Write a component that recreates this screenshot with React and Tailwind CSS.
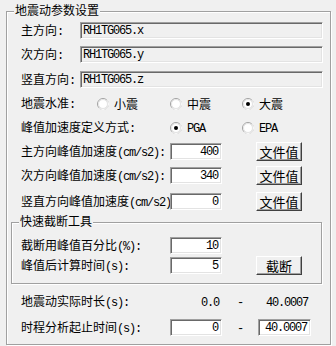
import React from 'react';

const mono = "font-['Liberation_Mono',monospace] text-[12px] tracking-[-1.2px]";

function M({ children }) {
  return <span className={mono}>{children}</span>;
}

function Edit({ value, w = 'w-[52px]', readOnly = false }) {
  return (
    <div
      className={`${w} h-[17px] flex-none flex items-center border border-t-[#a0a0a0] border-l-[#a0a0a0] border-r-white border-b-white shadow-[inset_1px_1px_0_#696969,inset_-1px_-1px_0_#e3e3e3] ${
        readOnly ? 'bg-[#f0f0f0] justify-start pl-[2px]' : 'bg-white justify-end pr-[3px]'
      }`}
    >
      <span className={mono}>{value}</span>
    </div>
  );
}

function Btn({ children }) {
  return (
    <button className="ml-[34px] w-[46px] h-[19px] flex-none flex items-center justify-center bg-[#f0f0f0] border border-t-white border-l-white border-r-[#404040] border-b-[#404040] shadow-[inset_-1px_-1px_0_#a0a0a0] text-[13px] leading-[15px]">
      {children}
    </button>
  );
}

function Radio({ checked }) {
  return (
    <svg width="12" height="12" viewBox="0 0 12 12" className="flex-none">
      <circle cx="6" cy="6" r="5.5" fill="#fff" stroke="#a0a0a0" />
      <path d="M9.89 2.11 A5.5 5.5 0 0 1 2.11 9.89" fill="none" stroke="#fff" />
      <circle cx="6" cy="6" r="4.5" fill="#fff" stroke="#e3e3e3" />
      {checked && <circle cx="6" cy="6" r="2" fill="#000" />}
    </svg>
  );
}

function Option({ label, checked, w = 'w-[73px]' }) {
  return (
    <div className={`${w} flex-none flex items-center gap-[5px]`}>
      <Radio checked={checked} />
      <span>{label}</span>
    </div>
  );
}

function Row({ mt, label, lw = 'w-[149px]', children }) {
  return (
    <div className={`${mt} h-[17px] flex items-center`}>
      <div className={`${lw} flex-none whitespace-nowrap`}>{label}</div>
      {children}
    </div>
  );
}

export default function App() {
  return (
    <div className="w-[336px] h-[346px] bg-[#f0f0f0] pt-[11px] text-black font-['Noto_Sans_CJK_SC',sans-serif] text-[12px] leading-[14px]">
      <div className="relative ml-[6px] w-[325px] h-[334px] border border-[#a0a0a0] shadow-[inset_1px_1px_0_#fff,1px_1px_0_#fff] pl-[14px] flex flex-col">
        <div className="absolute left-[7px] -top-[9px] px-[1px] bg-[#f0f0f0]">地震动参数设置</div>

        <Row mt="mt-[10px]" lw="w-[59px]" label={<>主方向<M>:</M></>}>
          <Edit value="RH1TG065.x" w="w-[243px]" readOnly />
        </Row>
        <Row mt="mt-[7px]" lw="w-[59px]" label={<>次方向<M>:</M></>}>
          <Edit value="RH1TG065.y" w="w-[243px]" readOnly />
        </Row>
        <Row mt="mt-[8px]" lw="w-[59px]" label={<>竖直方向<M>:</M></>}>
          <Edit value="RH1TG065.z" w="w-[243px]" readOnly />
        </Row>

        <Row mt="mt-[7px]" lw="w-[76px]" label={<>地震水准<M>:</M></>}>
          <Option label="小震" />
          <Option label="中震" w="w-[72px]" />
          <Option label="大震" checked />
        </Row>
        <Row mt="mt-[7px]" label={<>峰值加速度定义方式<M>:</M></>}>
          <Option label={<M>PGA</M>} checked w="w-[72px]" />
          <Option label={<M>EPA</M>} />
        </Row>

        <Row mt="mt-[7px]" label={<>主方向峰值加速度<M>(cm/s2):</M></>}>
          <Edit value="400" />
          <Btn>文件值</Btn>
        </Row>
        <Row mt="mt-[7px]" label={<>次方向峰值加速度<M>(cm/s2):</M></>}>
          <Edit value="340" />
          <Btn>文件值</Btn>
        </Row>
        <Row mt="mt-[9px]" label={<>竖直方向峰值加速度<M>(cm/s2):</M></>}>
          <Edit value="0" />
          <Btn>文件值</Btn>
        </Row>

        <div className="relative mt-[12px] -ml-[10px] w-[311px] h-[62px] flex-none border border-[#a0a0a0] shadow-[inset_1px_1px_0_#fff,1px_1px_0_#fff] pl-[9px] flex flex-col">
          <div className="absolute left-[7px] -top-[9px] px-[1px] bg-[#f0f0f0]">快速截断工具</div>
          <Row mt="mt-[14px]" label={<>截断用峰值百分比<M>(%):</M></>}>
            <Edit value="10" />
          </Row>
          <Row mt="mt-[3px]" label={<>峰值后计算时间<M>(s):</M></>}>
            <Edit value="5" />
            <Btn>截断</Btn>
          </Row>
        </div>

        <Row mt="mt-[9px]" label={<>地震动实际时长<M>(s):</M></>}>
          <div className="w-[52px] flex-none text-right pr-[3px]"><M>0.0</M></div>
          <div className="w-[36px] flex-none text-center"><M>-</M></div>
          <div className="w-[53px] flex-none text-right pr-[3px]"><M>40.0007</M></div>
        </Row>
        <Row mt="mt-[9px]" label={<>时程分析起止时间<M>(s):</M></>}>
          <Edit value="0" />
          <div className="w-[36px] flex-none text-center"><M>-</M></div>
          <Edit value="40.0007" w="w-[53px]" />
        </Row>
      </div>
    </div>
  );
}
